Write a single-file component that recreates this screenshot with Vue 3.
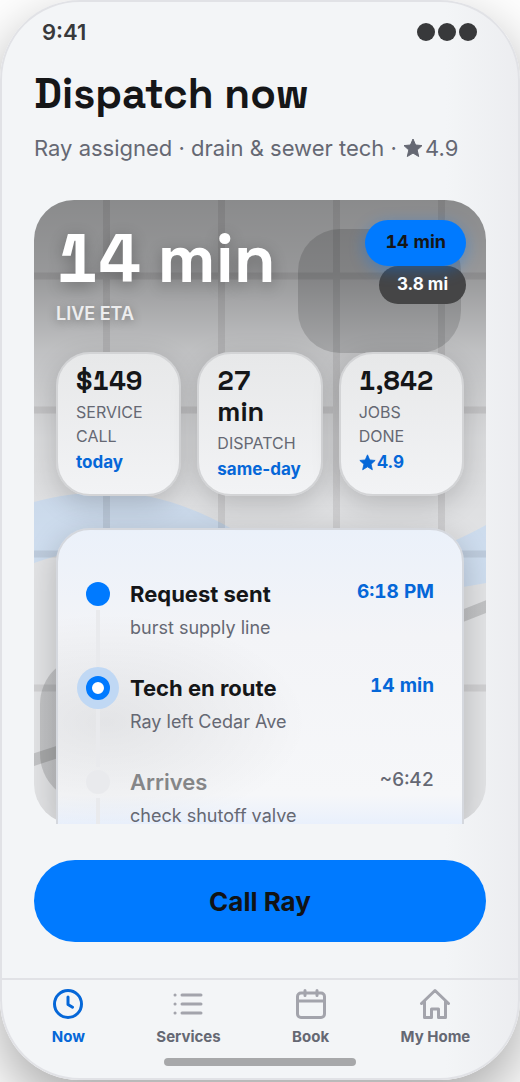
<template>
  <main class="phone">
    <div class="status">
      <span>9:41</span>
      <span class="dots"><i></i><i></i><i></i></span>
    </div>

    <header class="head">
      <h1>Dispatch now</h1>
      <p>
        Ray assigned · drain &amp; sewer tech ·
        <span class="rating"><svg class="star" viewBox="0 0 20 20"><path :d="star" /></svg>4.9</span>
      </p>
    </header>

    <section class="hero">
      <div class="map">
        <svg viewBox="0 0 452 624" preserveAspectRatio="none">
          <rect width="452" height="624" fill="#e6e7e9" />
          <path d="M0 302 C70 284 130 290 200 330 C290 382 370 370 452 325 V383 C350 402 270 395 190 365 C120 340 60 342 0 363 Z" fill="#d2e1f3" />
          <rect x="264" y="29" width="163" height="124" rx="42" fill="#000" fill-opacity=".14" />
          <rect x="6" y="456" width="170" height="146" rx="48" fill="#000" fill-opacity=".14" />
          <path d="M72.500 0V624M187.500 0V624M302.500 0V624M407.500 0V624M0 76H452M0 210H452M0 354H452M0 488H452" stroke="#000" stroke-opacity=".08" stroke-width="7" />
          <path d="M-4 561 C120 520 320 460 456 405" fill="none" stroke="#000" stroke-opacity=".14" stroke-width="12" />
        </svg>
      </div>

      <div class="content">
        <div class="top">
          <div class="eta">
            <strong>14 min</strong>
            <span>LIVE ETA</span>
          </div>
          <div class="badges">
            <span class="badge blue">14 min</span>
            <span class="badge dark">3.8 mi</span>
          </div>
        </div>

        <div class="stats">
          <div v-for="stat in stats" :key="stat.label" class="stat">
            <strong>{{ stat.value }}</strong>
            <span class="label">{{ stat.label }}</span>
            <span class="note"><svg v-if="stat.star" class="star" viewBox="0 0 20 20"><path :d="star" /></svg>{{ stat.note }}</span>
          </div>
        </div>

        <ol class="sheet">
          <li v-for="step in steps" :key="step.title" :class="step.state">
            <div class="rail"><i class="dot"></i></div>
            <div class="info">
              <h2>{{ step.title }}</h2>
              <p>{{ step.text }}</p>
            </div>
            <time>{{ step.time }}</time>
          </li>
        </ol>
      </div>
    </section>

    <button class="call" type="button">Call Ray</button>

    <nav class="tabs">
      <button v-for="tab in tabs" :key="tab.name" type="button" :class="{ active: activo === tab.name }" @click="activo = tab.name">
        <svg viewBox="0 0 32 32"><path :d="tab.icon" /></svg>
        <span>{{ tab.name }}</span>
      </button>
    </nav>
    <div class="home-bar"></div>
  </main>
</template>

<script setup>
import { ref } from 'vue'

const star = 'M10 1 L12.600 7 L19 7.600 L14.200 12 L15.700 18.500 L10 15.100 L4.300 18.500 L5.800 12 L1 7.600 L7.400 7 Z'

const stats = [
  { value: '$149', label: 'SERVICE CALL', note: 'today' },
  { value: '27 min', label: 'DISPATCH', note: 'same-day' },
  { value: '1,842', label: 'JOBS DONE', note: '4.9', star: true }
]

const steps = [
  { title: 'Request sent', text: 'burst supply line', time: '6:18 PM', state: 'done' },
  { title: 'Tech en route', text: 'Ray left Cedar Ave', time: '14 min', state: 'current' },
  { title: 'Arrives', text: 'check shutoff valve', time: '~6:42', state: 'pending' }
]

const activo = ref('Now')

const tabs = [
  { name: 'Now', icon: 'M16 2.500a13.500 13.500 0 1 0 0 27a13.500 13.500 0 1 0 0-27M16 9v7.500l4.500 2.700' },
  { name: 'Services', icon: 'M10 7H29M10 16H29M10 25H29M3 7h.1M3 16h.1M3 25h.1' },
  { name: 'Book', icon: 'M6 5H26a3.500 3.500 0 0 1 3.500 3.500V26a3.500 3.500 0 0 1-3.500 3.500H6A3.500 3.500 0 0 1 2.500 26V8.500A3.500 3.500 0 0 1 6 5M2.500 13H29.500M10 2.500V7.500M22 2.500V7.500' },
  { name: 'My Home', icon: 'M2.500 15.500L16 2.500L29.500 15.500M5.500 13V29.500H12.500V21H19.500V29.500H26.500V13' }
]
</script>

<style>
body {
  margin: 0;
  min-height: 100vh;
  background: #fff;
}
</style>

<style scoped>
* {
  box-sizing: border-box;
}

.phone {
  height: calc(100vh - 2px);
  display: flex;
  flex-direction: column;
  overflow: hidden;
  border: 2px solid #e1e2e6;
  border-radius: 80px;
  background: linear-gradient(to right, #f3f5f7 86%, #ecedf0);
  box-shadow: 0 24px 60px rgba(0, 0, 0, 0.35);
  color: #151618;
  font-family: Inter, "Liberation Sans", sans-serif;
}

h1, h2, p, ol {
  margin: 0;
  padding: 0;
}

button {
  border: 0;
  background: none;
  font-family: inherit;
  cursor: pointer;
}

.star {
  width: 20px;
  height: 20px;
  fill: currentColor;
  stroke: currentColor;
  stroke-width: 1;
  stroke-linejoin: round;
}

.status {
  display: flex;
  justify-content: space-between;
  align-items: center;
  padding: 16px 41px 0 40px;
  line-height: 28px;
  font-size: 22px;
  font-weight: 600;
  color: #38393b;
}

.dots {
  display: flex;
  gap: 3px;
}

.dots i {
  width: 18px;
  height: 18px;
  border-radius: 50%;
  background: #38393b;
}

.head {
  padding: 22px 32px 0;
}

h1 {
  font-family: "Space Grotesk", Inter, sans-serif;
  font-size: 42px;
  line-height: 52px;
  font-weight: 700;
}

.head p {
  margin-top: 12px;
  font-size: 22px;
  line-height: 32px;
  color: #656873;
  white-space: nowrap;
}

.rating .star {
  margin-right: 2px;
  vertical-align: -2px;
}

.hero {
  position: relative;
  flex: 1;
  min-height: 0;
  margin: 36px 32px 0;
  overflow: hidden;
}

/* the map lies under everything else in the hero */
.map {
  position: absolute;
  inset: 0;
  overflow: hidden;
  border-radius: 40px;
}

.map svg {
  display: block;
  width: 100%;
  height: 100%;
}

/* shadow of the sheet, kept inside the rounded map */
.map::before {
  content: "";
  position: absolute;
  inset: 328px 22px 0;
  border-radius: 34px 34px 0 0;
  box-shadow: 0 8px 32px rgba(0, 0, 0, 0.2);
}

.map::after {
  content: "";
  position: absolute;
  inset: 0;
  background: linear-gradient(rgba(0, 0, 0, 0.4), rgba(0, 0, 0, 0.34) 12%, rgba(0, 0, 0, 0.17) 24%, rgba(0, 0, 0, 0.06) 38%, rgba(0, 0, 0, 0.02) 55%);
}

.content {
  position: relative;
  padding: 20px 22px 0;
}

.top {
  display: flex;
  justify-content: space-between;
  height: 132px;
}

.eta strong,
.blue,
.stat strong,
time {
  font-variant-numeric: tabular-nums;
}

.eta strong {
  display: block;
  padding-top: 3px;
  font-family: "Space Grotesk", Inter, sans-serif;
  font-size: 68px;
  line-height: 72px;
  color: #fff;
  white-space: nowrap;
  text-shadow: 0 4px 16px rgba(0, 0, 0, 0.3);
}

.eta span {
  display: block;
  margin-top: 7px;
  font-size: 18px;
  line-height: 24px;
  font-weight: 600;
  color: #ededee;
  text-shadow: 0 2px 10px rgba(0, 0, 0, 0.35);
}

.badges {
  display: flex;
  flex-direction: column;
  align-items: flex-end;
  margin-right: -2px;
}

.badge {
  border-radius: 24px;
  white-space: nowrap;
}

.blue {
  position: relative;
  z-index: 1;
  padding: 10px 20px 12px;
  background: #007aff;
  box-shadow: 0 4px 16px rgba(0, 122, 255, 0.4);
  font-size: 18px;
  line-height: 24px;
  font-weight: 700;
}

.dark {
  padding: 6px 18px 8px;
  background: #454546;
  color: #fff;
  font-size: 17px;
  line-height: 24px;
  font-weight: 700;
}

.stats {
  display: grid;
  grid-template-columns: repeat(3, minmax(0, 1fr));
  gap: 16px;
}

.stat {
  display: flex;
  flex-direction: column;
  padding: 11px 18px 13px;
  border: 2px solid #d3d4d6;
  border-radius: 34px;
  background: linear-gradient(#e7e8e9, #f2f3f5);
  box-shadow: 0 8px 28px rgba(0, 0, 0, 0.18);
}

.stat strong {
  font-family: "Space Grotesk", Inter, sans-serif;
  font-size: 27px;
  line-height: 31px;
}

.stat .label {
  margin-top: 4px;
  font-size: 16px;
  line-height: 24px;
  color: #656873;
}

.stat .note {
  display: flex;
  align-items: center;
  gap: 1px;
  margin-top: 2px;
  font-size: 17px;
  line-height: 24px;
  font-weight: 700;
  color: #0567d8;
  white-space: nowrap;
}

.stat .star {
  width: 17px;
  height: 17px;
}

.sheet {
  margin-top: 32px;
  padding: 49px 28px 0;
  list-style: none;
  border: 2px solid #d5d8de;
  border-radius: 34px 34px 0 0;
  background:
    radial-gradient(ellipse at 12% 58%, rgba(0, 0, 0, 0.07), transparent 40%),
    linear-gradient(#ebf1fa, #f3f4f7 32%, #f6f7f9 80%, #e9f0fc 89%);
}

.sheet li {
  display: flex;
  height: 94px;
}

.rail {
  display: flex;
  flex-direction: column;
  align-items: center;
  width: 24px;
  margin-right: 20px;
  padding-top: 3px;
}

.rail::after {
  content: "";
  flex: 1;
  width: 4px;
  margin-top: 4px;
  background: #e9eaed;
}

.dot {
  position: relative;
  z-index: 1;
  width: 24px;
  height: 24px;
  border-radius: 50%;
  background: #007aff;
}

.current .dot {
  border: 6px solid #007aff;
  background: #fff;
  box-shadow: 0 0 0 9px #c0d8f4;
}

.pending .dot {
  background: #e9eaed;
}

.info {
  flex: 1;
}

h2 {
  padding-top: 1px;
  font-size: 22px;
  line-height: 28px;
  font-weight: 700;
}

.pending h2 {
  font-weight: 600;
  color: #858688;
}

.info p {
  margin-top: 7px;
  font-size: 18px;
  line-height: 26px;
  color: #656873;
}

time {
  padding-top: 1px;
  font-size: 19px;
  line-height: 24px;
  font-weight: 700;
  color: #0567d8;
}

.pending time {
  font-weight: 500;
  color: #656873;
}

.call {
  flex: none;
  height: 82px;
  margin: 36px 32px;
  border-radius: 41px;
  background: #007aff;
  color: #111315;
  font-size: 26px;
  font-weight: 700;
}

.tabs {
  display: flex;
  justify-content: space-around;
  padding: 8px 12px 0 14px;
  border-top: 2px solid #e1e2e6;
}

.tabs button {
  display: flex;
  flex-direction: column;
  align-items: center;
  gap: 7px;
  padding: 0;
  font-size: 15px;
  line-height: 20px;
  font-weight: 700;
  color: #656873;
}

.tabs svg {
  width: 32px;
  height: 32px;
  fill: none;
  stroke: #a3a4ac;
  stroke-width: 3;
  stroke-linecap: round;
  stroke-linejoin: round;
}

.tabs .active {
  color: #0567d8;
}

.tabs .active svg {
  stroke: #0567d8;
}

.home-bar {
  flex: none;
  width: 192px;
  height: 8px;
  margin: 11px auto 12px;
  border-radius: 4px;
  background: #a7a8aa;
}
</style>
